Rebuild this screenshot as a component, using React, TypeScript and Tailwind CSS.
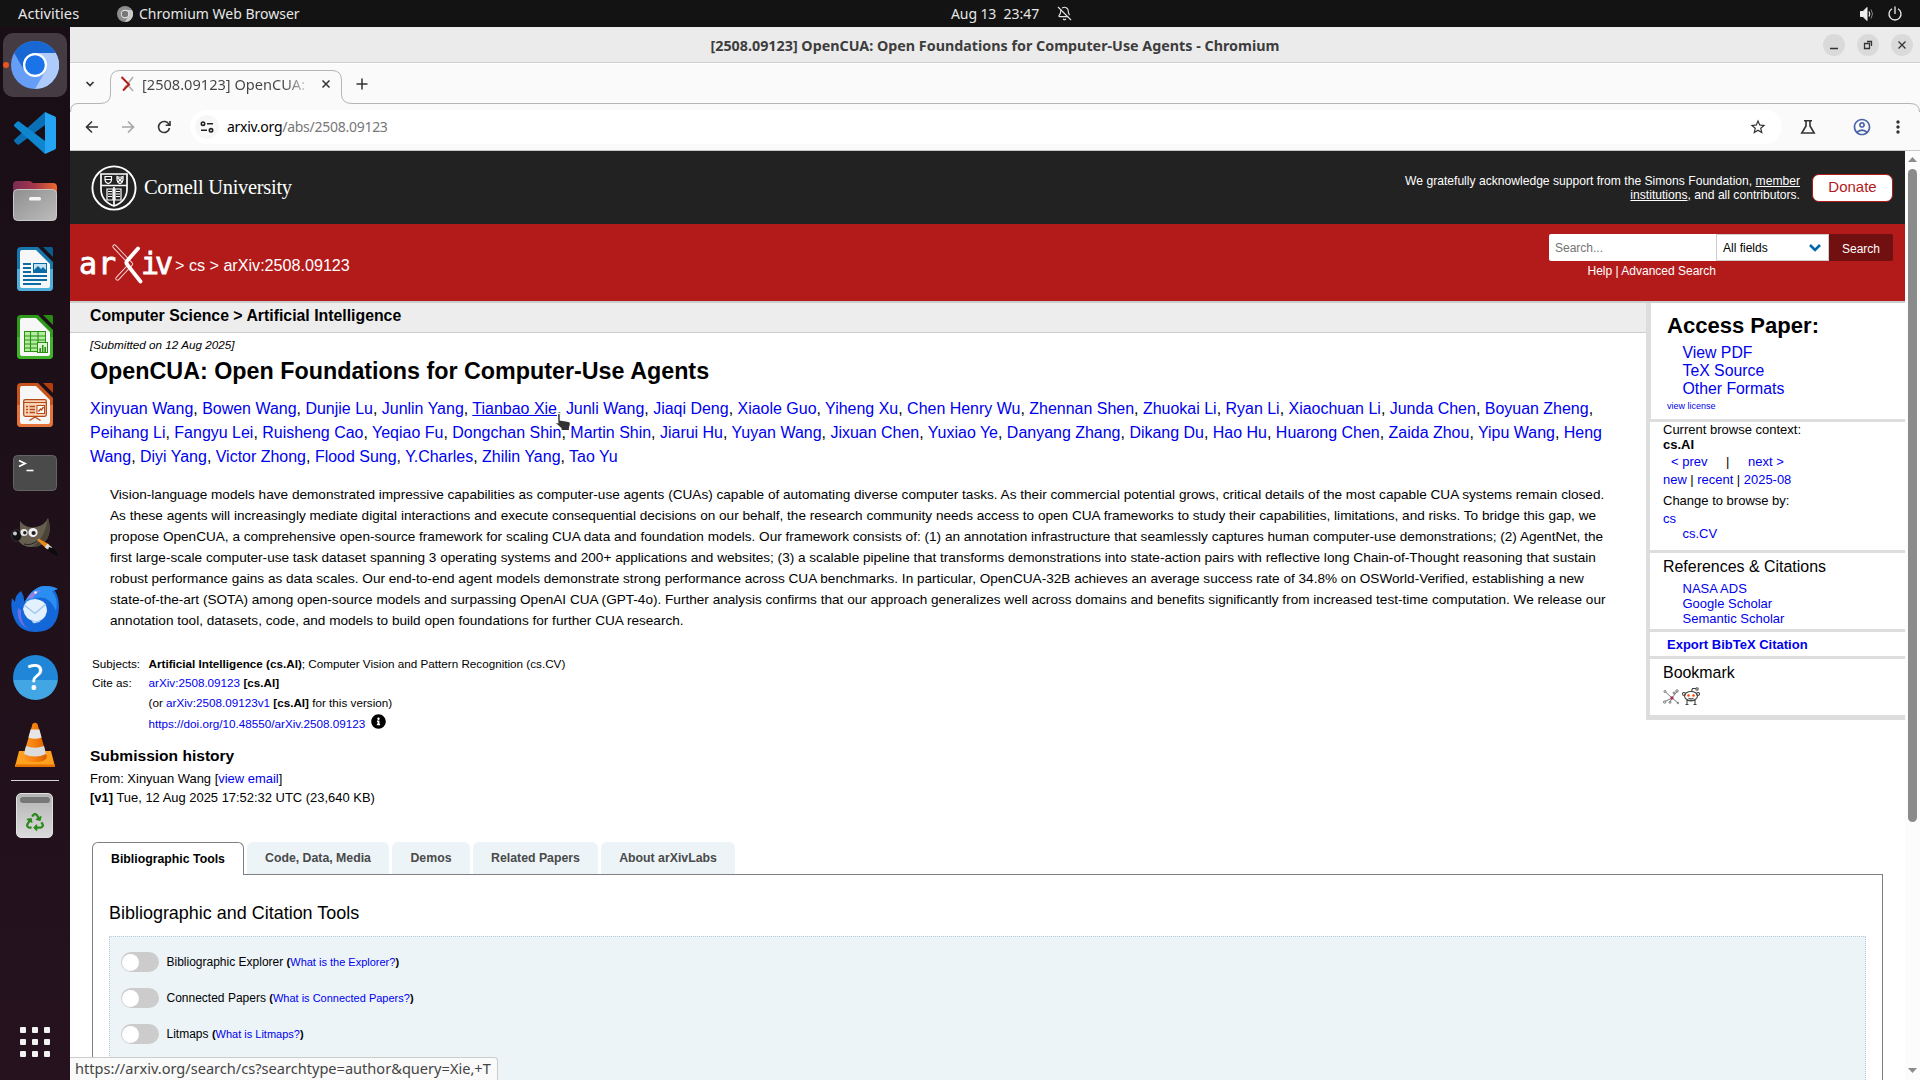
import React from "react";
import type { ReactNode } from "react";
import { BellOff } from "lucide-react";
import { MdStarBorder, MdMoreVert, MdOutlineAccountCircle } from "react-icons/md";
import { FaRecycle, FaInfoCircle } from "react-icons/fa";

const A = ({ children, className = "" }: { children: ReactNode; className?: string }) => (
  <a className={`text-[#0000ee] ${className}`}>{children}</a>
);

/* ---------- dock icons ---------- */

function ChromiumIcon() {
  return (
    <svg viewBox="0 0 48 48" className="size-12">
      <circle cx="24" cy="24" r="24" fill="#669df6" />
      <path d="M24 12H44.8A24 24 0 0 1 24 48L34.4 30Z" fill="#aecbfa" />
      <path d="M3.2 12A24 24 0 0 1 44.8 12H24A12 12 0 0 0 13.6 30Z" fill="#1967d2" />
      <circle cx="24" cy="24" r="12" fill="#fff" />
      <circle cx="24" cy="24" r="9.8" fill="#1a73e8" />
    </svg>
  );
}

function CodeIcon() {
  return (
    <svg viewBox="0 0 48 48" className="size-12">
      <path d="M34 3V16L8 35.5Q7 36 6 35.2L3.5 32.8Q2.5 31.5 3.5 30.4Z" fill="#0a6fb5" />
      <path d="M34 45V32L8 12.5Q7 12 6 12.8L3.5 15.2Q2.5 16.5 3.5 17.6Z" fill="#0f86d0" />
      <path d="M34 3L44 7.6Q45 8 45 9.5V38.5Q45 40 44 40.4L34 45Z" fill="#24a4f2" />
    </svg>
  );
}

function FilesIcon() {
  return (
    <svg viewBox="0 0 48 48" className="size-12">
      <defs>
        <linearGradient id="fb" x1="0" x2="1"><stop offset="0" stopColor="#7a2b54" /><stop offset=".5" stopColor="#a6374a" /><stop offset="1" stopColor="#ee6a2d" /></linearGradient>
        <linearGradient id="ff" x1="0" y1="0" x2="1" y2="1"><stop offset="0" stopColor="#8f8f8f" /><stop offset="1" stopColor="#bcbcbc" /></linearGradient>
      </defs>
      <path d="M2 8Q2 4 6 4H18Q20 4 22 6H42Q46 6 46 10V20H2Z" fill="url(#fb)" />
      <rect x="2.5" y="12.5" width="43" height="31" rx="4" fill="url(#ff)" stroke="#c9c9c9" />
      <rect x="18" y="20" width="12" height="3.6" rx="1.5" fill="#f5f5f5" />
    </svg>
  );
}

function OfficeDoc({ dark, mid, light, children }: { dark: string; mid: string; light: string; children: ReactNode }) {
  return (
    <svg viewBox="0 0 48 48" className="size-12">
      <path d="M10 2H27L42 17V42Q42 46 38 46H10Q6 46 6 42V6Q6 2 10 2Z" fill={mid} />
      <path d="M6 24H42V42Q42 46 38 46H10Q6 46 6 42Z" fill={light} />
      <path d="M11 5H25L39 19V41Q39 43 37 43H11Q9 43 9 41V7Q9 5 11 5Z" fill="#f7f7f7" />
      <path d="M32 2H40.5Q42 2 42 3.5V12Z" fill={dark} />
      {children}
    </svg>
  );
}

function WriterIcon() {
  return (
    <OfficeDoc dark="#0b5c8c" mid="#1577ab" light="#4fb0dc">
      <g stroke="#0b6ba5" strokeWidth="1.8">
        <path d="M12 19H20M12 23H20M12 27H20M12 31H36M12 35H36M12 39H30" />
      </g>
      <rect x="22.5" y="18.5" width="13" height="9" fill="#bfe3f5" stroke="#0b6ba5" />
      <path d="M23 27V25L27 21L30 24L32 22L35 25V27Z" fill="#0b6ba5" />
    </OfficeDoc>
  );
}

function CalcIcon() {
  return (
    <OfficeDoc dark="#2a8a13" mid="#2f9b1a" light="#41b32b">
      <rect x="13.5" y="18.5" width="21" height="20" fill="#b5eda0" stroke="#2a9115" />
      <path d="M13 23H35M13 27H35M13 31H35M13 35H35M19.5 18V39M27 18V39" stroke="#2a9115" strokeWidth="1.1" />
      <rect x="26.5" y="29.5" width="10" height="10" fill="#ddf7d3" stroke="#2a9115" />
      <path d="M29.2 39V35M31.7 39V32M34.2 39V34" stroke="#2a9115" strokeWidth="1.6" />
    </OfficeDoc>
  );
}

function ImpressIcon() {
  return (
    <OfficeDoc dark="#b23f0b" mid="#c9531c" light="#e4733c">
      <rect x="12.7" y="18.7" width="22.6" height="16.6" rx="1.5" fill="#fbd4b8" stroke="#b54a17" strokeWidth="1.3" />
      <path d="M13 21.5H35" stroke="#b54a17" />
      <path d="M15 25.5H17M15 28.5H17M15 31.5H17M18.5 25.5H24M18.5 28.5H24M18.5 31.5H24" stroke="#b54a17" strokeWidth="1.7" />
      <rect x="26" y="24.5" width="7.5" height="8" fill="#fff" stroke="#b54a17" />
      <path d="M27.5 30.5L29.5 28L30.5 29L32.5 26M24 35V37M24 36L18.5 39.5M24 36L29.5 39.5" stroke="#b54a17" strokeWidth="1.4" fill="none" />
    </OfficeDoc>
  );
}

function TerminalIcon() {
  return (
    <svg viewBox="0 0 48 48" className="size-12">
      <rect x="2.5" y="6.5" width="43" height="35" rx="4" fill="#4a4a4a" stroke="#646464" />
      <path d="M8 11.5L14 14.5L8 17.5" stroke="#fff" strokeWidth="1.8" fill="none" />
      <path d="M15.5 21.5H22.5" stroke="#fff" strokeWidth="1.6" />
    </svg>
  );
}

function GimpIcon() {
  return (
    <svg viewBox="0 0 48 48" className="size-12">
      <path d="M9 4Q15 12 25 10Q34 8 37 1Q41 14 36 22Q30 31 20 30Q11 30 7 23Q5 19 9 14Z" fill="#665f50" />
      <path d="M37 1Q41 14 36 22Q30 31 20 30Q33 24 37 1Z" fill="#4b4539" />
      <ellipse cx="5.5" cy="18.5" rx="5" ry="5.8" fill="#111" stroke="#4a4a4a" strokeWidth=".6" />
      <circle cx="4" cy="16.5" r="2" fill="#ccc" />
      <circle cx="13" cy="15.5" r="3.6" fill="#e8e8e8" /><circle cx="13.8" cy="15.8" r="1.7" fill="#222" />
      <circle cx="22" cy="15.5" r="4.6" fill="#f0f0f0" /><circle cx="22.6" cy="16" r="2.1" fill="#222" />
      <path d="M13 27Q20 29 26 24" stroke="#222" fill="none" />
      <path d="M27 22.5L37 28L35.5 30.5Z" stroke="#e88b1c" strokeWidth="2" fill="#e88b1c" />
      <path d="M35 28.5L40 32" stroke="#ddd" strokeWidth="4" />
      <path d="M38 30Q45 31 47 39Q40 37 37 33Z" fill="#0c0c0c" />
    </svg>
  );
}

function ThunderbirdIcon() {
  return (
    <svg viewBox="0 0 48 48" className="size-12">
      <path d="M10 6Q14 12 13 18Q22 1 34 1Q42 1 47 4L43.500 5Q48 12 48 22Q47 47 25 47Q8 47 3 33Q-1 24 1 13L4 17Q4 10 10 6Z" fill="#1467d8" />
      <path d="M13 18Q22 1 34 1Q42 1 47 4L41 6Q48 14 45 26Q38 10 26 13Z" fill="#2b8df0" />
      <path d="M16 14Q20 6 30 5Q24 9 22 13Z" fill="#9a7de8" />
      <path d="M7 23Q5 39 18 44Q9 39 10 25Z" fill="#6a6fe6" />
      <circle cx="24.5" cy="7.500" r="1.2" fill="#fff" />
      <path d="M12 24Q14 14 24 14Q36 15 36 26Q34 36.500 24 36.500Q14 35 12 24Z" fill="#e3f0fd" />
      <path d="M13 20L24 28.5L35 19" stroke="#9cc2ec" strokeWidth="1.3" fill="none" />
      <path d="M20 34Q25 38 31 35Q27 39 22 38Z" fill="#bcd8f7" />
    </svg>
  );
}

function HelpIcon() {
  return (
    <div className="flex size-[45px] flex-col items-center justify-center rounded-full bg-linear-to-b from-[#1f86d8] from-55% to-[#42a5e4] to-55% font-['Noto_Sans',sans-serif] text-[36px] leading-none text-white">
      ?
    </div>
  );
}

function VlcIcon() {
  return (
    <svg viewBox="0 0 48 48" className="size-12">
      <defs><linearGradient id="vl" x1="0" x2="1"><stop offset="0" stopColor="#ff9a2b" /><stop offset=".5" stopColor="#f57f0a" /><stop offset="1" stopColor="#d95f00" /></linearGradient></defs>
      <path d="M8 30H40L44 45.5H4Z" fill="#ffa01e" />
      <path d="M4 43.5H44V46H4Z" fill="#e57200" />
      <path d="M21.500 3Q24 .5 26.500 3L36 36Q35 41 24 41Q13 41 12 36Z" fill="url(#vl)" />
      <path d="M19.6 8.5H28.4L30.6 16.5Q24 19 17.4 16.5Z" fill="#e6e6e6" />
      <path d="M15 25Q24 28.5 33 25L35 33Q24 38 13 33Z" fill="#dcdcdc" />
    </svg>
  );
}

function TrashIcon() {
  return (
    <div className="flex h-[45px] w-[37px] flex-col items-center rounded-[5px] border border-[#e2e2e2] bg-linear-to-b from-[#b4b4b4] to-[#dadada] pt-[3px]">
      <div className="h-1.5 w-[30px] rounded-[3px] bg-[#777]" />
      <FaRecycle className="mt-2.5 size-[18px] text-[#2b8a1d]" />
    </div>
  );
}

const dockIcons = [CodeIcon, FilesIcon, WriterIcon, CalcIcon, ImpressIcon, TerminalIcon, GimpIcon, ThunderbirdIcon, HelpIcon, VlcIcon];

function Dock() {
  return (
    <aside className="flex w-[70px] shrink-0 flex-col bg-linear-to-b from-[#190e15] to-[#25121e] pt-1">
      <div className="relative flex h-17 items-center justify-center">
        <div className="flex size-16 items-center justify-center rounded-[10px] bg-[#453b42]"><ChromiumIcon /></div>
        <span className="absolute left-[3px] top-[31px] size-1.5 rounded-full bg-[#e95420]" />
      </div>
      {dockIcons.map((I, i) => (
        <div key={i} className="flex h-17 items-center justify-center"><I /></div>
      ))}
      <div className="mx-auto mt-px h-px w-12 bg-[#d5d2d4]" />
      <div className="flex h-17 items-center justify-center pr-px"><TrashIcon /></div>
      <div className="mx-auto mt-auto mb-[23px] grid grid-cols-3 gap-1.5">
        {Array.from({ length: 9 }, (_, i) => <span key={i} className="size-1.5 rounded-[1px] bg-[#f2f2f2]" />)}
      </div>
    </aside>
  );
}

/* ---------- desktop and browser chrome ---------- */

function TopBar() {
  return (
    <header className="relative flex h-[27px] items-center bg-[#131313] font-['Noto_Sans',sans-serif] text-[14px] leading-[27px] text-[#e6e6e6]">
      <span className="ml-[18px] w-[99px] text-[14.7px]">Activities</span>
      <svg viewBox="0 0 16 16" className="size-4">
        <circle cx="8" cy="8" r="8" fill="#8d8d8d" />
        <path d="M8 4H15A8 8 0 0 1 8 16L11.5 10Z" fill="#c9c9c9" />
        <circle cx="8" cy="8" r="4.2" fill="#eee" /><circle cx="8" cy="8" r="3.3" fill="#777" />
      </svg>
      <span className="ml-1.5">Chromium Web Browser</span>
      <div className="absolute left-[951px] flex items-center">
        <span className="w-[52.5px] tracking-[-0.1px]">Aug 13</span>
        <span className="w-[53px]">23:47</span>
        <BellOff className="size-[15px]" strokeWidth={1.8} />
      </div>
      <div className="mr-[17px] ml-auto flex items-center gap-3">
        <svg viewBox="0 0 16 16" className="size-4" fill="none" stroke="#eee">
          <path d="M1.500 5.500H4L8 1.500V14.500L4 10.500H1.500Z" fill="#eee" />
          <path d="M10 5.500Q11.500 8 10 10.500" strokeWidth="1.300" />
          <path d="M12 3.500Q15 8 12 12.500" stroke="#888" />
        </svg>
        <svg viewBox="0 0 16 16" className="size-4" fill="none" stroke="#eee" strokeWidth="1.300">
          <path d="M5 2.800A6 6 0 1 0 11 2.800M8 .500V8" />
        </svg>
      </div>
    </header>
  );
}

function TitleBar() {
  return (
    <div className="relative flex h-9 items-center justify-center border-b border-[#d0d0d0] bg-[#ebebeb]">
      <span className="pt-0.5 font-['Noto_Sans',sans-serif] text-[14.300px] leading-[35px] font-bold text-[#3d3d3d]">
        [2508.09123] OpenCUA: Open Foundations for Computer-Use Agents - Chromium
      </span>
      <div className="absolute right-[7px] flex gap-3 text-[#333]">
        {["M7 14.500H15", "M7.500 9.500H12.500V14.500H7.500ZM10 7.500H14.500V12", "M7.500 7.500L14.500 14.500M14.500 7.500L7.500 14.500"].map((d) => (
          <svg key={d} viewBox="0 0 22 22" className="size-[22px] rounded-full bg-[#dadada]" fill="none" stroke="currentColor" strokeWidth="1.300"><path d={d} /></svg>
        ))}
      </div>
    </div>
  );
}

function TabStrip() {
  return (
    <div className="relative flex h-10 items-center bg-[#fafafa] font-['Noto_Sans',sans-serif]">
      <svg viewBox="0 0 1850 50" className="absolute top-0 left-0 h-[50px] w-[1850px]" fill="none" stroke="#b5b5b5">
        <path d="M.5 48Q.5 39.500 8 39.500H30Q40.500 39.500 40.500 30V16Q40.500 6.500 50 6.500H262Q271.500 6.500 271.500 16V30Q271.500 39.500 282 39.500H1840Q1849.500 39.500 1849.500 48" />
      </svg>
      <svg viewBox="0 0 10 10" className="ml-[15px] size-2.5" fill="none" stroke="#333" strokeWidth="1.700"><path d="M1.500 3L5 6.500L8.500 3" /></svg>
      <svg viewBox="0 0 14 16" className="ml-[25px] h-4 w-3.5" fill="none">
        <path d="M13 1L8 7.500M6 9.500L4.500 12M7 8L13 15" stroke="#b8aca8" strokeWidth="1.600" />
        <path d="M1.500 1L9 8.500L3 14.500" stroke="#b31b1b" strokeWidth="2" />
      </svg>
      <span className="ml-[8px] w-[169px] overflow-hidden bg-linear-to-r from-[#444] from-85% to-transparent bg-clip-text text-[14.600px] leading-6 whitespace-nowrap text-transparent">
        [2508.09123] OpenCUA:
      </span>
      <svg viewBox="0 0 10 10" className="ml-[10px] size-2.5" fill="none" stroke="#333" strokeWidth="1.500"><path d="M1.500 1.500L8.500 8.500M8.500 1.500L1.500 8.500" /></svg>
      <svg viewBox="0 0 12 12" className="ml-[25px] size-3" fill="none" stroke="#333" strokeWidth="1.500"><path d="M6 .500V11.500M.500 6H11.500" /></svg>
    </div>
  );
}

function Toolbar() {
  return (
    <div className="flex h-[47px] items-center border-b border-[#c8c8c8] bg-[#fafafa] font-['Noto_Sans',sans-serif]">
      <svg viewBox="0 0 14 14" className="ml-[15px] size-3.5" fill="none" stroke="#333" strokeWidth="1.600"><path d="M13 7H2M7 1.500L1.500 7L7 12.500" /></svg>
      <svg viewBox="0 0 14 14" className="ml-[22px] size-3.5" fill="none" stroke="#a5a5a5" strokeWidth="1.600"><path d="M1 7H12M7 1.500L12.500 7L7 12.500" /></svg>
      <svg viewBox="0 0 14 14" className="ml-[22px] size-3.5" fill="none" stroke="#333" strokeWidth="1.600"><path d="M12 4.500A5.500 5.500 0 1 0 12.500 8M13 1V5.200H8.700" /></svg>
      <div className="ml-[19px] flex h-[34px] w-[1592px] items-center rounded-full bg-white pl-[5px]">
        <div className="flex size-6 items-center justify-center rounded-full bg-[#f7f7f7]">
          <svg viewBox="0 0 14 14" className="size-3.5" fill="none" stroke="#222" strokeWidth="1.600"><circle cx="3" cy="3.700" r="1.700" /><path d="M7 3.700H13M1 10.300H7" /><circle cx="11" cy="10.300" r="1.700" /></svg>
        </div>
        <span className="mb-0.5 ml-2 text-[14px] tracking-[-0.27px] text-[#777]"><span className="text-black">arxiv.org</span>/abs/2508.09123</span>
        <MdStarBorder className="mr-[15px] ml-auto size-[18px] text-[#333]" />
      </div>
      <svg viewBox="0 0 16 16" className="ml-[18px] size-4" fill="none" stroke="#333" strokeWidth="1.600"><path d="M4 1.800H12M6 2V7L1.800 14H14.200L10 7V2" /></svg>
      <MdOutlineAccountCircle className="ml-[36px] size-5 text-[#4a63a8]" />
      <MdMoreVert className="ml-[16px] size-5 text-[#333]" />
    </div>
  );
}

/* ---------- page ---------- */

function CornellSeal() {
  return (
    <svg viewBox="0 0 46 46" className="size-[46px]" fill="none" stroke="#fff">
      <circle cx="23" cy="23" r="21.600" strokeWidth="1.900" />
      <path d="M10 9H36V24Q36 36 23 41Q10 36 10 24Z" strokeWidth="1.700" />
      <path d="M10 20.500H36M23 22V41" strokeWidth="1.700" />
      <path d="M14 11.500H20.500V15Q20 18 17.200 18.700Q14.500 18 14 15ZM14 14.500H20.500M26 11.500Q29 13 32 11.500V15Q31.500 18 29 18.700Q26.500 18 26 15ZM27 13L31 17M31 13L27 17" strokeWidth="1.200" />
      <path d="M16 24H22V35H16ZM24 24H30V35H24ZM17 26.500H21M17 29H21M17 31.500H21M25 26.500H29M25 29H29M25 31.500H29" strokeWidth="1.200" />
    </svg>
  );
}

function ArxivLogo() {
  return (
    <div className="flex h-10 w-[91px] items-start font-['DejaVu_Sans_Mono',monospace] text-[30px] leading-10 text-white [-webkit-text-stroke:0.8px_white]">
      <span className="-ml-px w-[33px] tracking-[1px]">ar</span>
      <svg viewBox="0 0 32 40" className="h-10 w-8 shrink-0" fill="none">
        <path d="M2.500 2.500L19 20L5.500 34.500" stroke="#f6dada" strokeWidth="4.200" strokeLinecap="round" strokeLinejoin="round" />
        <path d="M2.500 2.500L19 20L5.500 34.500" stroke="#b31b1b" strokeWidth="2.400" strokeLinecap="round" strokeLinejoin="round" />
        <path d="M26 4.500L15 17Q13.500 19 15.500 21L28.500 37.500" stroke="#fff" strokeWidth="3.800" strokeLinecap="round" />
      </svg>
      <span className="-ml-[3px] tracking-[-4px]">iv</span>
    </div>
  );
}

function CornellBar() {
  return (
    <div className="flex h-[73px] items-center bg-[#222] text-white">
      <div className="ml-[21px]"><CornellSeal /></div>
      <span className="ml-[7px] font-['Liberation_Serif',serif] text-[20.500px] leading-none tracking-[-0.300px]">Cornell University</span>
      <p className="mt-px ml-auto text-right text-[12.120px] leading-[14px]">
        We gratefully acknowledge support from the Simons Foundation, <u>member</u><br /><u>institutions</u>, and all contributors.
      </p>
      <button className="mr-3 ml-3 h-7 w-[81px] rounded-[7px] border border-[#b31b1b] bg-white pb-0.5 text-[15px] leading-none text-[#b31b1b]">Donate</button>
    </div>
  );
}

function SearchBar() {
  return (
    <div className="flex h-[79px] items-start border-b-2 border-[#ccc] bg-[#b31b1b] text-white">
      <div className="mt-5 ml-[10px]"><ArxivLogo /></div>
      <span className="mt-[31px] ml-[4px] text-[16.140px] leading-5">&gt; cs &gt; arXiv:2508.09123</span>
      <div className="mt-[10px] mr-3 ml-auto w-[344px] text-[12px]">
        <div className="flex h-[27px]">
          <div className="w-[167px] rounded-l-[2px] bg-white pl-1.5 leading-[28px] text-[#757575]">Search...</div>
          <div className="flex w-[113px] items-center border border-[#ccc] bg-white pr-[7px] pl-1.5 text-black">
            All fields
            <svg viewBox="0 0 12 8" className="ml-auto h-2 w-3" fill="none" stroke="#0068ac" strokeWidth="2.600"><path d="M1 1L6 6L11 1" /></svg>
          </div>
          <div className="w-16 rounded-r-[2px] bg-[#701010] pl-[13px] leading-[30px]">Search</div>
        </div>
        <div className="mt-[3px] ml-[38.500px] leading-[14px]">Help | Advanced Search</div>
      </div>
    </div>
  );
}

const authorLines = [
  "Xinyuan Wang|Bowen Wang|Dunjie Lu|Junlin Yang|Tianbao Xie|Junli Wang|Jiaqi Deng|Xiaole Guo|Yiheng Xu|Chen Henry Wu|Zhennan Shen|Zhuokai Li|Ryan Li|Xiaochuan Li|Junda Chen|Boyuan Zheng",
  "Peihang Li|Fangyu Lei|Ruisheng Cao|Yeqiao Fu|Dongchan Shin|Martin Shin|Jiarui Hu|Yuyan Wang|Jixuan Chen|Yuxiao Ye|Danyang Zhang|Dikang Du|Hao Hu|Huarong Chen|Zaida Zhou|Yipu Wang|Heng",
  "Wang|Diyi Yang|Victor Zhong|Flood Sung|Y.Charles|Zhilin Yang|Tao Yu",
].map((l) => l.split("|"));

const abstractLines = [
  "Vision-language models have demonstrated impressive capabilities as computer-use agents (CUAs) capable of automating diverse computer tasks. As their commercial potential grows, critical details of the most capable CUA systems remain closed.",
  "As these agents will increasingly mediate digital interactions and execute consequential decisions on our behalf, the research community needs access to open CUA frameworks to study their capabilities, limitations, and risks. To bridge this gap, we",
  "propose OpenCUA, a comprehensive open-source framework for scaling CUA data and foundation models. Our framework consists of: (1) an annotation infrastructure that seamlessly captures human computer-use demonstrations; (2) AgentNet, the",
  "first large-scale computer-use task dataset spanning 3 operating systems and 200+ applications and websites; (3) a scalable pipeline that transforms demonstrations into state-action pairs with reflective long Chain-of-Thought reasoning that sustain",
  "robust performance gains as data scales. Our end-to-end agent models demonstrate strong performance across CUA benchmarks. In particular, OpenCUA-32B achieves an average success rate of 34.8% on OSWorld-Verified, establishing a new",
  "state-of-the-art (SOTA) among open-source models and surpassing OpenAI CUA (GPT-4o). Further analysis confirms that our approach generalizes well across domains and benefits significantly from increased test-time computation. We release our",
  "annotation tool, datasets, code, and models to build open foundations for further CUA research.",
];

function HandCursor() {
  return (
    <svg viewBox="0 0 18 20" className="absolute -right-[15px] top-[12px] z-10 h-5 w-[18px]">
      <path d="M3.500 2Q5 .500 6.300 2.200V8L14.500 9.300Q16.800 9.800 16.500 12L15.500 16V18.500H7V16.500L1.500 11.500Q1.800 9.800 3.800 10.800Z" fill="#333" stroke="#fff" strokeWidth="1.200" />
    </svg>
  );
}

function Paper() {
  return (
    <main className="w-[1576px]">
      <h1 className="h-[30px] border-b border-[#ccc] bg-[#ededed] pl-5 text-[15.840px] leading-[25px] font-bold">Computer Science &gt; Artificial Intelligence</h1>
      <div className="pl-5">
        <div className="mt-[5px] text-[11.700px] leading-[14px] italic">[Submitted on 12 Aug 2025]</div>
        <h2 className="mt-[5px] text-[23.300px] leading-7 font-bold">OpenCUA: Open Foundations for Computer-Use Agents</h2>
        <div className="mt-3 text-[15.970px] leading-6 whitespace-nowrap">
          {authorLines.map((line, i) => (
            <div key={i}>
              {line.map((n, j) => (
                <React.Fragment key={n}>
                  {n === "Tianbao Xie" ? <span className="relative"><A className="underline">{n}</A><HandCursor /></span> : <A>{n}</A>}
                  {j === line.length - 1 ? (i === 0 ? "," : "") : ", "}
                </React.Fragment>
              ))}
            </div>
          ))}
        </div>
        <blockquote className="mt-[15px] ml-5 text-[13.600px] leading-[21px] whitespace-nowrap">
          {abstractLines.map((l) => <div key={l}>{l}</div>)}
        </blockquote>
        <div className="mt-[23px] ml-0.5 grid grid-cols-[56.500px_auto] grid-rows-[19px_20px_21px_21px] text-[11.700px] leading-[19px]">
          <span>Subjects:</span>
          <span><b>Artificial Intelligence (cs.AI)</b>; Computer Vision and Pattern Recognition (cs.CV)</span>
          <span>Cite as:</span>
          <span><A>arXiv:2508.09123</A> <b>[cs.AI]</b></span>
          <span />
          <span>(or <A>arXiv:2508.09123v1</A> <b>[cs.AI]</b> for this version)</span>
          <span />
          <span className="flex"><A>https://doi.org/10.48550/arXiv.2508.09123</A><FaInfoCircle className="ml-1.5 size-[15px]" /></span>
        </div>
        <h3 className="mt-[9px] mb-px text-[15.550px] leading-6 font-bold">Submission history</h3>
        <div className="text-[12.950px] leading-[19px]">
          <div>From: Xinyuan Wang [<A>view email</A>]</div>
          <div><b>[v1]</b> Tue, 12 Aug 2025 17:52:32 UTC (23,640 KB)</div>
        </div>
      </div>
    </main>
  );
}

function BookmarkIcons() {
  return (
    <div className="mt-[5px] flex gap-[3px]">
      <svg viewBox="0 0 16 18" className="h-[18px] w-4" fill="none" stroke="#777">
        <path d="M2.500 5L9 11L15 16M9 11L14 4.500M9 11L2 14.500M9 11L7 15" />
        <circle cx="2" cy="4.500" r="1" /><circle cx="14" cy="4" r="1.200" /><circle cx="1.700" cy="15" r="1.200" /><circle cx="7" cy="15.300" r="1" /><circle cx="15" cy="16" r=".800" /><circle cx="11" cy="6" r="1" />
        <circle cx="9" cy="11" r="1.200" fill="#b03050" stroke="#b03050" />
      </svg>
      <svg viewBox="0 0 18 18" className="size-[18px]" fill="none" stroke="#444" strokeWidth="1.100">
        <ellipse cx="9" cy="9" rx="6.500" ry="4.500" fill="#fff" />
        <circle cx="2" cy="7" r="1.500" /><circle cx="16" cy="7" r="1.500" />
        <path d="M9.500 4.500L10.500 1.500H14M5 13V17M13 13V17M5 13Q9 15 13 13M3.500 17.500H6.500M11.500 17.500H14.500" />
        <circle cx="15" cy="2" r="1.200" />
        <circle cx="6.500" cy="8.500" r="1.300" fill="#ff4500" stroke="none" /><circle cx="11.500" cy="8.500" r="1.300" fill="#ff4500" stroke="none" />
        <path d="M6.500 11.300Q9 12.500 11.500 11.300" />
      </svg>
    </div>
  );
}

function Sidebar() {
  return (
    <aside className="h-[417px] w-[259px] border-b-[5px] border-l-4 border-[#ddd] text-[13px] leading-[15px]">
      <section className="h-[119px] border-b-[3px] border-l border-[#ddd] pt-2.5 pl-4">
        <h2 className="text-[22.050px] leading-[25px] font-bold">Access Paper:</h2>
        <ul className="mt-1.5 pl-[15.500px] text-[15.800px] leading-[18px]">
          <li><A>View PDF</A></li><li><A>TeX Source</A></li><li><A>Other Formats</A></li>
        </ul>
        <div className="mt-0.5 text-[9px] leading-3"><A>view license</A></div>
      </section>
      <section className="h-[131px] border-b-[3px] border-[#ddd] pl-[13px]">
        <div>Current browse context:</div>
        <div className="font-bold">cs.AI</div>
        <div className="mt-0.5 flex pl-2"><A className="w-[55px]">&lt; prev</A><span className="w-[22px]">|</span><A>next &gt;</A></div>
        <div className="mt-[3px] text-[12.950px]"><A>new</A> | <A>recent</A> | <A>2025-08</A></div>
        <div className="mt-1.5">Change to browse by:</div>
        <div className="mt-[3px]"><A>cs</A></div>
        <div className="pl-[19.500px]"><A>cs.CV</A></div>
      </section>
      <section className="h-[79px] border-b-[3px] border-[#ddd] pt-[5px] pl-[13px]">
        <h3 className="text-[15.950px] leading-[18px]">References &amp; Citations</h3>
        <ul className="mt-[5px] pl-[19.500px]">
          <li><A>NASA ADS</A></li><li><A>Google Scholar</A></li><li><A>Semantic Scholar</A></li>
        </ul>
      </section>
      <section className="h-[27px] border-b-[3px] border-[#ddd] pt-[5px] pl-[17px]"><A className="font-bold">Export BibTeX Citation</A></section>
      <section className="pt-[5px] pl-[13px]">
        <h3 className="text-[15.950px] leading-[18px]">Bookmark</h3>
        <BookmarkIcons />
      </section>
    </aside>
  );
}

const toggles = [
  ["Bibliographic Explorer", "What is the Explorer?"],
  ["Connected Papers", "What is Connected Papers?"],
  ["Litmaps", "What is Litmaps?"],
];

function Labs() {
  const tab = "h-8 rounded-t-[6px] bg-[#ecf4f8] text-center leading-[32px] text-[#4a4a4a]";
  return (
    <div className="mt-[35px] mr-[22px] ml-[22px]">
      <div className="flex gap-[3px] text-[12.300px] font-bold">
        <div className="relative z-10 h-[33px] w-[152px] rounded-t-[6px] border border-b-0 border-[#808080] bg-white text-center leading-[32px]">Bibliographic Tools</div>
        <div className={`${tab} w-[142px]`}>Code, Data, Media</div>
        <div className={`${tab} w-[78px]`}>Demos</div>
        <div className={`${tab} w-[125px]`}>Related Papers</div>
        <div className={`${tab} w-[134px]`}>About arXivLabs</div>
      </div>
      <div className="-mt-px h-[240px] border border-[#808080] px-4 pt-[27px]">
        <h2 className="text-[17.970px] leading-[22px]">Bibliographic and Citation Tools</h2>
        <div className="mt-3 h-[200px] border border-dotted border-[#b8cbd6] bg-[#ecf4f8] px-[11px] pt-[15px]">
          {toggles.map(([name, q]) => (
            <div key={name} className="mb-4 flex h-5 items-center text-[12px]">
              <span className="flex h-5 w-[38px] items-center rounded-full bg-[#ccc] pl-px"><span className="size-[17px] rounded-full bg-white" /></span>
              <span className="ml-[7.500px] whitespace-pre">{name} </span>
              <span className="text-[11px] font-bold">(<A className="font-normal">{q}</A>)</span>
            </div>
          ))}
        </div>
      </div>
    </div>
  );
}

function Scrollbar() {
  return (
    <div className="flex w-[15px] flex-col items-center bg-[#fcfcfc] pt-1.5 pb-[7px]">
      <svg viewBox="0 0 9 5" className="h-[5px] w-[9px]"><path d="M0 5L4.500 0L9 5Z" fill="#8b8b8b" /></svg>
      <div className="mt-[7px] h-[653px] w-[9px] rounded-full bg-[#8b8b8b]" />
      <svg viewBox="0 0 9 5" className="mt-auto h-[5px] w-[9px]"><path d="M0 0L4.500 5L9 0Z" fill="#8b8b8b" /></svg>
    </div>
  );
}

export default function App() {
  return (
    <div className="h-[1080px] w-[1920px] overflow-hidden bg-white font-['Liberation_Sans',Arial,sans-serif] text-black">
      <TopBar />
      <div className="flex h-[1053px]">
        <Dock />
        <div className="relative flex w-[1850px] flex-col">
          <TitleBar />
          <div className="mt-px"><TabStrip /></div>
          <Toolbar />
          <div className="flex h-[929px] overflow-hidden">
            <div className="w-[1835px] overflow-hidden">
              <CornellBar />
              <SearchBar />
              <div className="flex h-[504px] items-start"><Paper /><Sidebar /></div>
              <Labs />
            </div>
            <Scrollbar />
          </div>
          <div className="absolute bottom-0 left-0 h-[23px] w-[428px] rounded-tr-[4px] border-t border-r border-[#ccc] bg-[#fafafa] pl-[5px] font-['Noto_Sans',sans-serif] text-[14.580px] leading-[20px] whitespace-nowrap text-[#444]">
            https://arxiv.org/search/cs?searchtype=author&amp;query=Xie,+T
          </div>
        </div>
      </div>
    </div>
  );
}
